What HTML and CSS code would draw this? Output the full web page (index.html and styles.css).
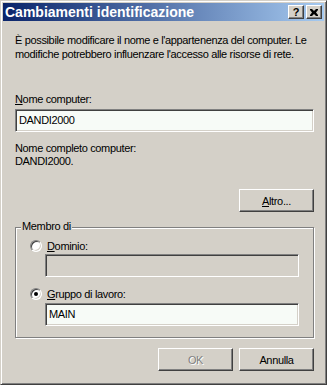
FILE: index.html
```html
<!DOCTYPE html>
<html lang="it">
<head>
    <meta charset="UTF-8">
    <title>Cambiamenti identificazione</title>
    <link rel="stylesheet" href="styles.css">
</head>
<body>
    <div class="window">
        <div class="titlebar">
            <span class="title">Cambiamenti identificazione</span>
            <span class="tb-btn">?</span>
            <span class="tb-btn close">
                <svg width="8" height="7" viewBox="0 0 8 7"><path d="M0 0h2l2 2 2-2h2v1l-2 2.5 2 2.5v1h-2l-2-2-2 2h-2v-1l2-2.5-2-2.5z" fill="#000"/></svg>
            </span>
        </div>

        <div class="content">
            <p class="intro">È possibile modificare il nome e l'appartenenza del computer. Le modifiche potrebbero influenzare l'accesso alle risorse di rete.</p>

            <div class="label name-label"><u>N</u>ome computer:</div>
            <div class="edit">DANDI2000</div>

            <div class="label full-label">Nome completo computer:</div>
            <div class="label">DANDI2000.</div>

            <div class="row right more">
                <div class="button"><u>A</u>ltro...</div>
            </div>

            <div class="group">
                <div class="legend">Membro di</div>
                <div class="radio-row">
                    <span class="radio"></span>
                    <span><u>D</u>ominio:</span>
                </div>
                <div class="edit sub disabled"></div>
                <div class="radio-row second">
                    <span class="radio checked"></span>
                    <span><u>G</u>ruppo di lavoro:</span>
                </div>
                <div class="edit sub">MAIN</div>
            </div>

            <div class="row right buttons">
                <div class="button disabled">OK</div>
                <div class="button">Annulla</div>
            </div>
        </div>
    </div>
</body>
</html>
```

FILE: styles.css
```css
body {
    margin: 0;
    background: #d4d0c8;
}

.window {
    width: 327px;
    height: 385px;
    box-sizing: border-box;
    background: #d4d0c8;
    border: 1px solid;
    border-color: #d4d0c8 #404040 #404040 #d4d0c8;
    box-shadow: inset 1px 1px #fff, inset -1px -1px #808080;
    padding: 2px;
    font-family: "Liberation Sans", Arial, sans-serif;
    font-size: 11px;
    color: #000;
}

.titlebar {
    height: 18px;
    display: flex;
    align-items: center;
    background: linear-gradient(90deg, #0a246a, #a6caf0);
    padding-right: 2px;
}

.title {
    flex: 1;
    color: #fff;
    font-weight: bold;
    font-size: 14px;
    padding-left: 2px;
    white-space: nowrap;
}

.tb-btn {
    width: 16px;
    height: 14px;
    box-sizing: border-box;
    background: #d4d0c8;
    border: 1px solid;
    border-color: #fff #404040 #404040 #fff;
    box-shadow: inset -1px -1px #808080;
    display: flex;
    align-items: center;
    justify-content: center;
    font-weight: bold;
    font-size: 11px;
    line-height: 1;
}

.tb-btn.close {
    margin-left: 2px;
}

.content {
    padding: 12px 10px 0 12px;
    letter-spacing: -0.35px;
}

.intro {
    margin: 0;
    line-height: 14px;
}

.label {
    line-height: 13px;
}

.name-label {
    margin-top: 32px;
    margin-bottom: 3px;
}

.edit {
    height: 23px;
    box-sizing: border-box;
    border: 1px solid;
    border-color: #808080 #fff #fff #808080;
    box-shadow: inset 1px 1px #404040, inset -1px -1px #d4d0c8;
    background: #f7fbf7;
    padding: 4px 3px 0;
    line-height: 13px;
}

.edit.disabled {
    background: #d4d0c8;
}

.full-label {
    margin-top: 10px;
}

.row {
    display: flex;
}

.right {
    justify-content: flex-end;
    gap: 6px;
}

.more {
    margin-top: 21px;
}

.button {
    width: 75px;
    height: 23px;
    box-sizing: border-box;
    border: 1px solid;
    border-color: #fff #404040 #404040 #fff;
    box-shadow: inset -1px -1px #808080;
    display: flex;
    align-items: center;
    justify-content: center;
}

.button.disabled {
    color: #808080;
    text-shadow: 1px 1px #fff;
}

.group {
    margin-top: 15px;
    height: 111px;
    box-sizing: border-box;
    border: 1px solid #808080;
    box-shadow: inset 1px 1px #fff, 1px 1px #fff;
    padding: 0 14px;
}

.legend {
    width: fit-content;
    margin: -8px 0 0 -9px;
    padding: 0 1px;
    background: #d4d0c8;
    line-height: 13px;
}

.radio-row {
    display: flex;
    align-items: center;
    gap: 5px;
    margin-top: 6px;
    height: 13px;
}

.radio-row.second {
    margin-top: 10px;
}

.radio {
    width: 12px;
    height: 12px;
    box-sizing: border-box;
    border-radius: 50%;
    border: 1px solid;
    border-color: #808080 #fff #fff #808080;
    box-shadow: inset 1px 1px #404040, inset -1px -1px #d4d0c8;
    background: #fff;
    display: flex;
    align-items: center;
    justify-content: center;
}

.radio.checked::after {
    content: "";
    width: 4px;
    height: 4px;
    border-radius: 50%;
    background: #000;
}

.edit.sub {
    margin: 2px 0 0 15px;
}

.edit.sub:last-child {
    margin-top: 3px;
}

.buttons {
    margin-top: 10px;
}
```
